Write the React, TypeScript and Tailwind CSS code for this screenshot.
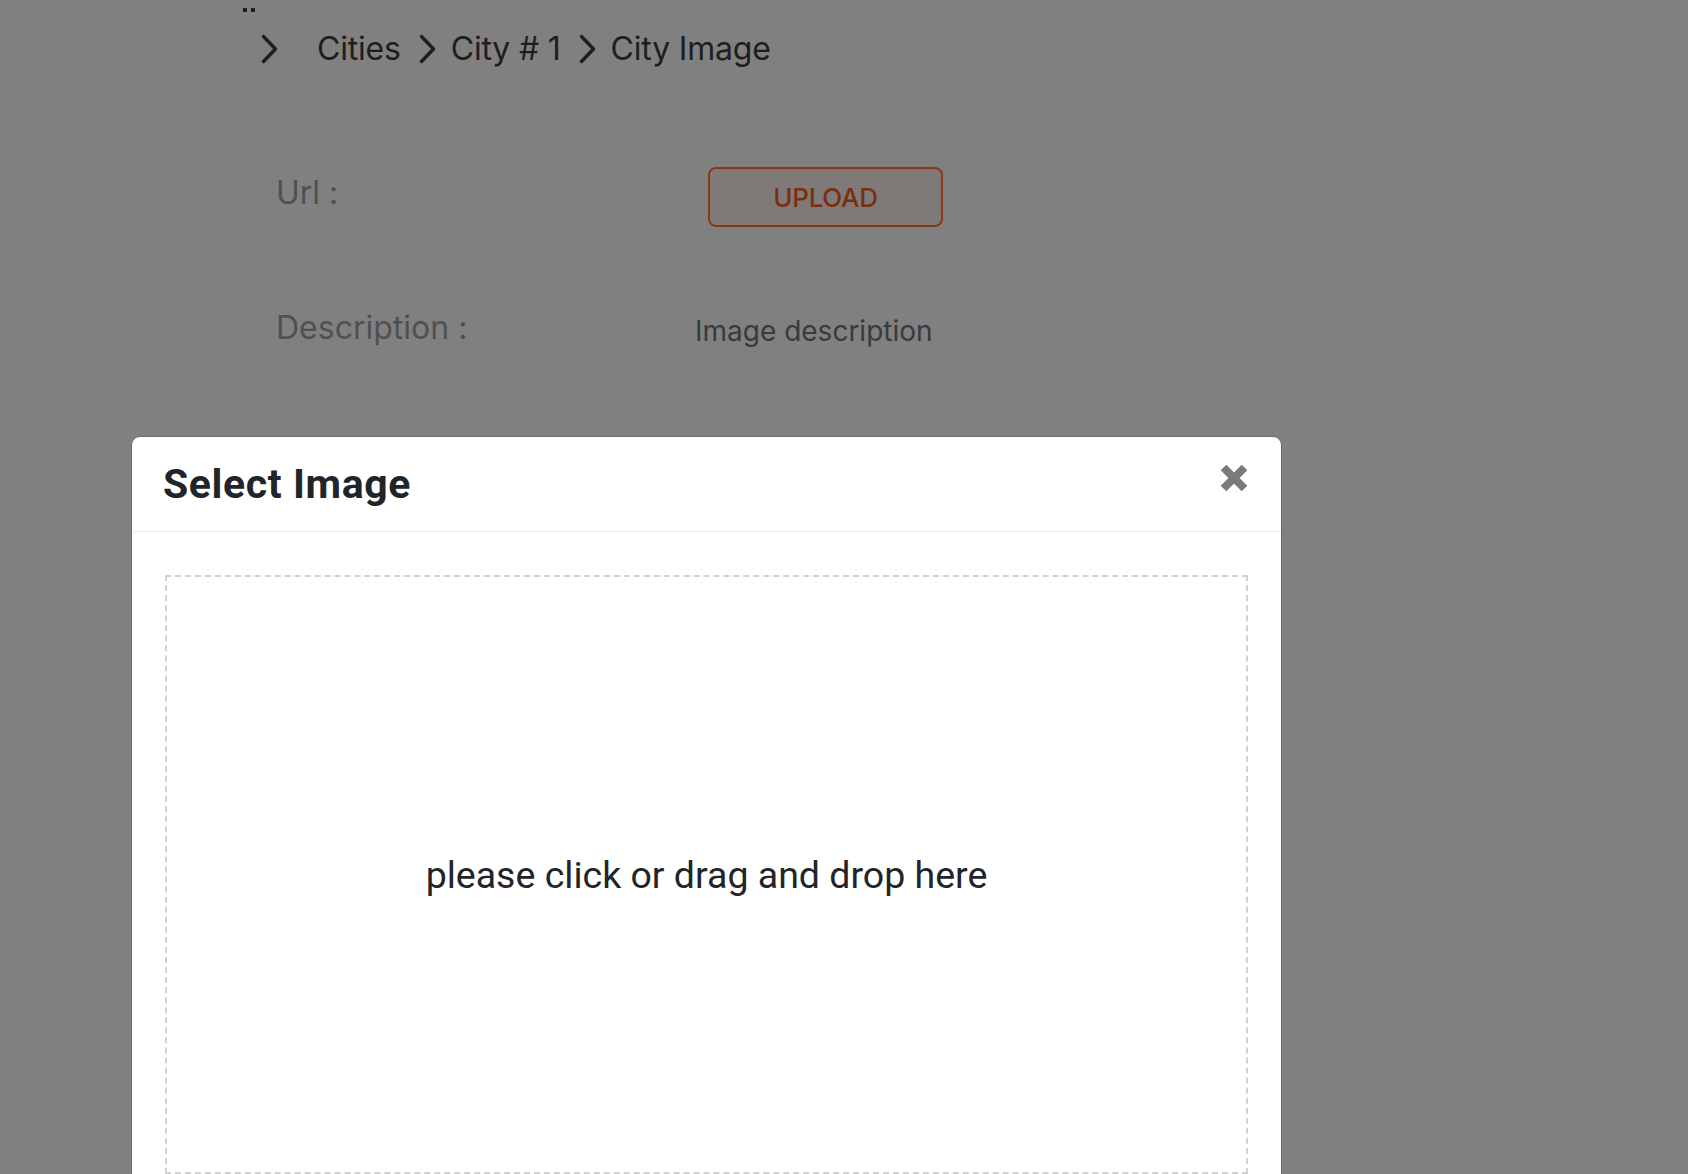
import React from 'react';

const crumbs = ['Cities', 'City # 1', 'City Image'];

function Chevron({ className = '' }: { className?: string }) {
  return (
    <svg width="17" height="30" viewBox="0 0 17 30" className={className} fill="none">
      <path d="M2.5 2.5 L14.5 15 L2.5 27.5" stroke="#1e1e1e" strokeWidth="3.4" strokeLinecap="round" strokeLinejoin="round" />
    </svg>
  );
}

function CloseIcon() {
  return (
    <svg width="30" height="30" viewBox="0 0 30 30">
      <path d="M4.5 4.5 L25.5 25.5 M25.5 4.5 L4.5 25.5" stroke="#7a7a7a" strokeWidth="8" strokeLinecap="butt" />
    </svg>
  );
}

export default function App() {
  return (
    <div className="relative w-full h-[1174px] overflow-hidden bg-[#808080] font-['Inter','Liberation_Sans',sans-serif]">
      {/* page behind the backdrop */}
      <div className="pl-[243px] pt-[8px]">
        <div className="flex gap-[4px]">
          <span className="w-[4px] h-[4px] bg-[#1e1e1e]" />
          <span className="w-[4px] h-[4px] bg-[#1e1e1e]" />
        </div>
        <nav className="flex items-center h-[40px] mt-[17px] text-[32px] leading-[40px] tracking-[-0.2px] text-[#1e1e1e]">
          <Chevron className="ml-[18px] mr-[39px]" />
          {crumbs.map((c, i) => (
            <React.Fragment key={c}>
              {i > 0 && <Chevron className="ml-[18px] mr-[15px]" />}
              <span>{c}</span>
            </React.Fragment>
          ))}
        </nav>
      </div>

      <div className="pl-[276px] mt-[98px]">
        <div className="flex items-start">
          <label className="w-[419px] mt-[6px] text-[32px] leading-[40px] text-[#505050]">Url :</label>
          <button className="ml-[13px] w-[235px] h-[60px] rounded-[8px] border-2 border-[#8a3916] bg-[#7f7a78] text-[26px] font-medium text-[#7a2f12] tracking-[-0.3px]">
            UPLOAD
          </button>
        </div>
        <div className="flex items-start mt-[81px]">
          <label className="w-[419px] text-[32px] leading-[40px] text-[#505050]">Description :</label>
          <div className="mt-[5px] text-[28px] leading-[36px] text-[#383a3e]">Image description</div>
        </div>
      </div>

      {/* modal */}
      <div className="absolute left-[131px] top-[436px] w-[1151px] bg-white border border-[#6a6a6a] rounded-t-[9px] font-['Roboto','Liberation_Sans',sans-serif] text-[#212529]">
        <div className="flex items-center justify-between h-[95px] pl-[31px] pr-[32px] border-b border-[#e9ecef]">
          <h5 className="text-[41px] leading-[48px] font-bold tracking-[0.6px]">Select Image</h5>
          <button className="-mt-[13px]">
            <CloseIcon />
          </button>
        </div>
        <div className="px-[33px] pt-[43px] pb-[40px]">
          <div className="h-[599px] border-2 border-dashed border-[#d2d2d2] flex items-center justify-center">
            <p className="text-[37.5px] leading-[44px]">please click or drag and drop here</p>
          </div>
        </div>
      </div>
    </div>
  );
}
